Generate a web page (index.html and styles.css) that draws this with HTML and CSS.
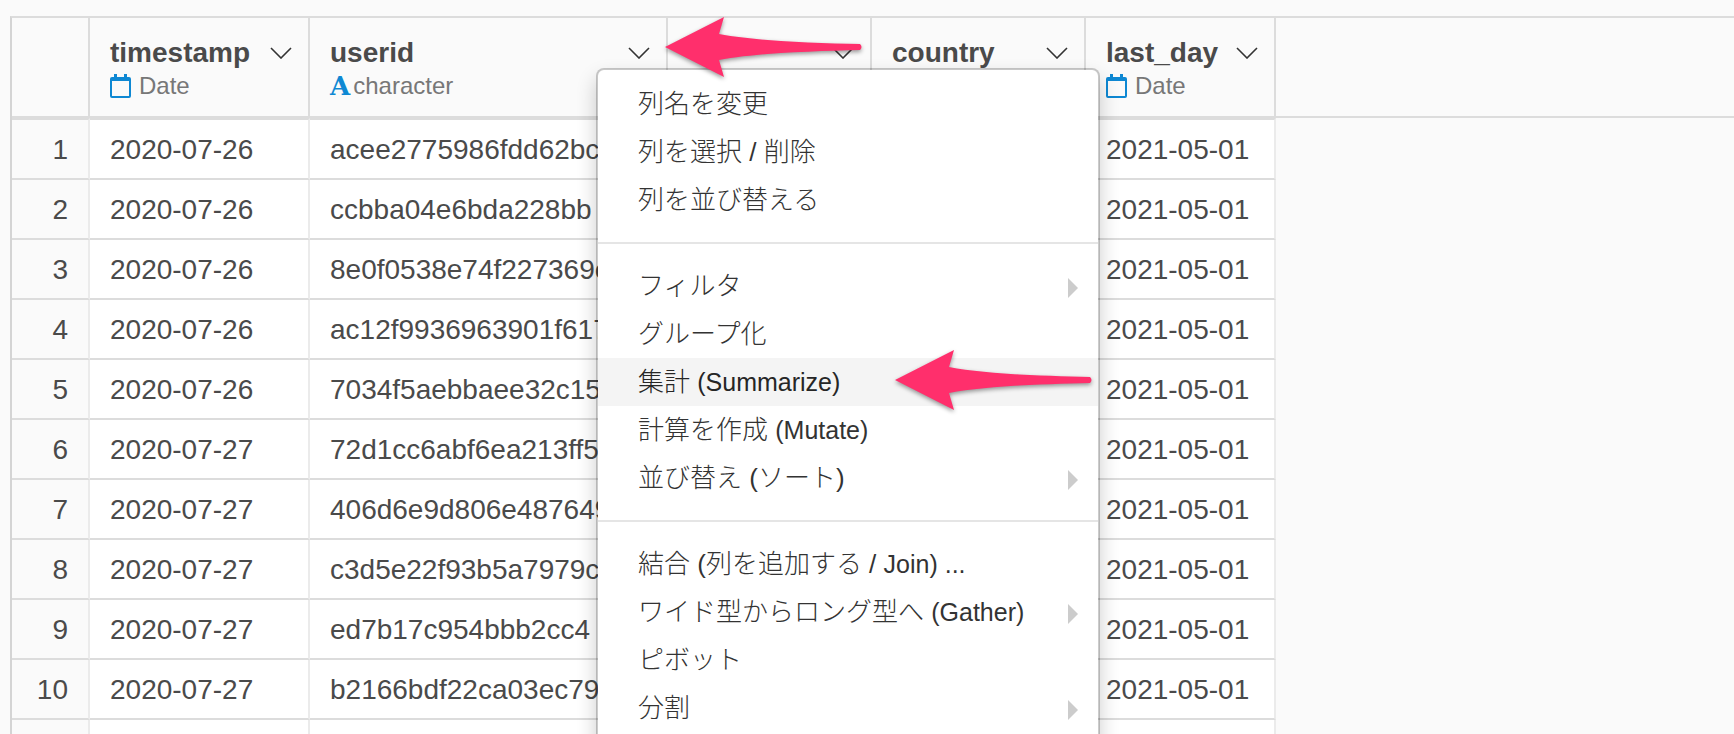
FILE: index.html
```
<!DOCTYPE html>
<html lang="ja">
<head>
    <meta charset="utf-8">
    <title>Table</title>
    <link rel="stylesheet" href="styles.css">
</head>
<body>
<svg class="defs" aria-hidden="true">
    <symbol id="chevron" viewBox="0 0 22 12">
        <path d="M1 1l10 10L21 1" fill="none" stroke="#333" stroke-width="1.6"/>
    </symbol>
    <symbol id="calendar" viewBox="0 0 21 24">
        <path fill="#0e88d3" fill-rule="evenodd" d="M4 0h3v3h7V0h3v3h2q2 0 2 2v17q0 2-2 2H2q-2 0-2-2V5q0-2 2-2h2zM2 7v15h17V7z"/>
    </symbol>
    <symbol id="arrow" viewBox="0 0 198 60">
        <path fill="#ff2f6c" d="M0 30L59 0L54 17C90 24 150 26 195 27Q198 30 195 33C150 34 90 36 54 43L59 60z"/>
    </symbol>
</svg>
<main class="viewer">
    <table class="grid">
        <colgroup>
            <col class="col-num">
            <col class="col-timestamp">
            <col class="col-userid">
            <col class="col-os">
            <col class="col-country">
            <col class="col-last-day">
            <col>
        </colgroup>
        <thead>
        <tr>
            <th></th>
            <th>
                <div class="name"><span>timestamp</span><button type="button" aria-label="timestamp"><svg class="chevron"><use href="#chevron"/></svg></button></div>
                <div class="type"><svg class="calendar"><use href="#calendar"/></svg>Date</div>
            </th>
            <th>
                <div class="name"><span>userid</span><button type="button" aria-label="userid"><svg class="chevron"><use href="#chevron"/></svg></button></div>
                <div class="type"><b class="letter">A</b>character</div>
            </th>
            <th>
                <div class="name"><span></span><button type="button" aria-label="column menu"><svg class="chevron"><use href="#chevron"/></svg></button></div>
                <div class="type"></div>
            </th>
            <th>
                <div class="name"><span>country</span><button type="button" aria-label="country"><svg class="chevron"><use href="#chevron"/></svg></button></div>
                <div class="type"></div>
            </th>
            <th>
                <div class="name"><span>last_day</span><button type="button" aria-label="last_day"><svg class="chevron"><use href="#chevron"/></svg></button></div>
                <div class="type"><svg class="calendar"><use href="#calendar"/></svg>Date</div>
            </th>
            <th class="rest"></th>
        </tr>
        </thead>
        <tbody>
        <tr><td class="num">1</td><td>2020-07-26</td><td>acee2775986fdd62bc</td><td></td><td></td><td>2021-05-01</td></tr>
        <tr><td class="num">2</td><td>2020-07-26</td><td>ccbba04e6bda228bb</td><td></td><td></td><td>2021-05-01</td></tr>
        <tr><td class="num">3</td><td>2020-07-26</td><td>8e0f0538e74f227369e</td><td></td><td></td><td>2021-05-01</td></tr>
        <tr><td class="num">4</td><td>2020-07-26</td><td>ac12f9936963901f617</td><td></td><td></td><td>2021-05-01</td></tr>
        <tr><td class="num">5</td><td>2020-07-26</td><td>7034f5aebbaee32c15</td><td></td><td></td><td>2021-05-01</td></tr>
        <tr><td class="num">6</td><td>2020-07-27</td><td>72d1cc6abf6ea213ff5</td><td></td><td></td><td>2021-05-01</td></tr>
        <tr><td class="num">7</td><td>2020-07-27</td><td>406d6e9d806e487649</td><td></td><td></td><td>2021-05-01</td></tr>
        <tr><td class="num">8</td><td>2020-07-27</td><td>c3d5e22f93b5a7979c</td><td></td><td></td><td>2021-05-01</td></tr>
        <tr><td class="num">9</td><td>2020-07-27</td><td>ed7b17c954bbb2cc4</td><td></td><td></td><td>2021-05-01</td></tr>
        <tr><td class="num">10</td><td>2020-07-27</td><td>b2166bdf22ca03ec79</td><td></td><td></td><td>2021-05-01</td></tr>
        <tr><td class="num"></td><td></td><td></td><td></td><td></td><td></td></tr>
        </tbody>
    </table>

    <div class="menu">
        <button type="button">列名を変更</button>
        <button type="button">列を選択 / 削除</button>
        <button type="button">列を並び替える</button>
        <hr>
        <button type="button" class="sub">フィルタ</button>
        <button type="button">グループ化</button>
        <button type="button" class="active">集計 <span class="en">(Summarize)</span></button>
        <button type="button">計算を作成 <span class="en">(Mutate)</span></button>
        <button type="button" class="sub">並び替え (ソート)</button>
        <hr>
        <button type="button">結合 (列を追加する / <span class="en">Join) ...</span></button>
        <button type="button" class="sub">ワイド型からロング型へ <span class="en">(Gather)</span></button>
        <button type="button">ピボット</button>
        <button type="button" class="sub">分割</button>
    </div>

    <svg class="arrow arrow-header"><use href="#arrow"/></svg>
    <svg class="arrow arrow-summarize"><use href="#arrow"/></svg>
</main>
</body>
</html>
```
FILE: styles.css
```
* {
    box-sizing: border-box
}

body {
    margin: 0;
    background: #fafafa;
    color: #4a4a4a;
    font: 28px/32px "Liberation Sans", "Noto Sans CJK JP", sans-serif
}

button {
    margin: 0;
    padding: 0;
    border: 0;
    background: none;
    color: inherit;
    font: inherit;
    cursor: pointer
}

.defs {
    display: none
}

.viewer {
    position: relative;
    height: 100vh;
    padding: 16px 0 0 10px;
    overflow: hidden
}

/* data grid */

.grid {
    width: 100%;
    table-layout: fixed;
    border-collapse: separate;
    border-spacing: 0;
    border-top: 2px solid #dcdcdc;
    border-left: 2px solid #d4d4d4
}

.col-num {
    width: 78px
}

.col-timestamp {
    width: 220px
}

.col-userid {
    width: 358px
}

.col-os {
    width: 204px
}

.col-country {
    width: 214px
}

.col-last-day {
    width: 190px
}

th {
    height: 100px;
    padding: 19px 16px 0 20px;
    border-right: 2px solid #dcdcdc;
    border-bottom: 2px solid #dcdcdc;
    text-align: left;
    vertical-align: top
}

th.rest {
    border-right: 0
}

.name {
    display: flex;
    align-items: center;
    justify-content: space-between;
    height: 32px
}

.name button {
    display: flex
}

.chevron {
    width: 22px;
    height: 12px
}

.type {
    display: flex;
    align-items: center;
    height: 34px;
    color: #777;
    font-size: 24px;
    font-weight: 400
}

.calendar {
    width: 21px;
    height: 24px;
    margin-right: 8px
}

.letter {
    margin-right: 3px;
    color: #0e88d3;
    font-family: "DejaVu Serif", serif;
    font-size: 26px
}

td {
    height: 60px;
    padding: 1px 18px 0 20px;
    border-right: 2px solid #ebebeb;
    border-bottom: 2px solid #dcdcdc;
    background: #fff;
    white-space: nowrap;
    overflow: hidden
}

tbody tr:first-child td {
    height: 62px;
    border-top: 2px solid #dcdcdc
}

td.num {
    padding-right: 20px;
    background: #fafafa;
    text-align: right
}

/* column menu */

.menu {
    position: absolute;
    top: 68px;
    left: 596px;
    width: 504px;
    padding: 10px 0 20px;
    border: 2px solid rgba(0, 0, 0, .2);
    border-radius: 8px;
    background: #fff;
    background-clip: padding-box;
    box-shadow: 0 10px 20px rgba(0, 0, 0, .2);
    color: #333;
    font-size: 26px;
    font-weight: 300
}

.menu button {
    display: block;
    width: 100%;
    height: 48px;
    padding: 0 20px 0 40px;
    line-height: 43px;
    text-align: left;
    white-space: pre
}

.menu .active {
    background: #f4f4f4;
    color: #262626
}

.menu .sub {
    display: flex;
    align-items: center
}

.menu .sub::after {
    content: "";
    margin-top: 4px;
    margin-left: auto;
    border: 10px solid transparent;
    border-right: 0;
    border-left-color: #ccc
}

.menu hr {
    height: 2px;
    margin: 18px 0;
    border: 0;
    background: #e5e5e5
}

.en {
    font-size: 25px
}

/* callout arrows */

.arrow {
    position: absolute;
    width: 198px;
    height: 60px;
    overflow: visible;
    filter: drop-shadow(0 2px 2px rgba(0, 0, 0, .4));
    pointer-events: none
}

.arrow-header {
    top: 17px;
    left: 665px
}

.arrow-summarize {
    top: 350px;
    left: 895px
}
```
